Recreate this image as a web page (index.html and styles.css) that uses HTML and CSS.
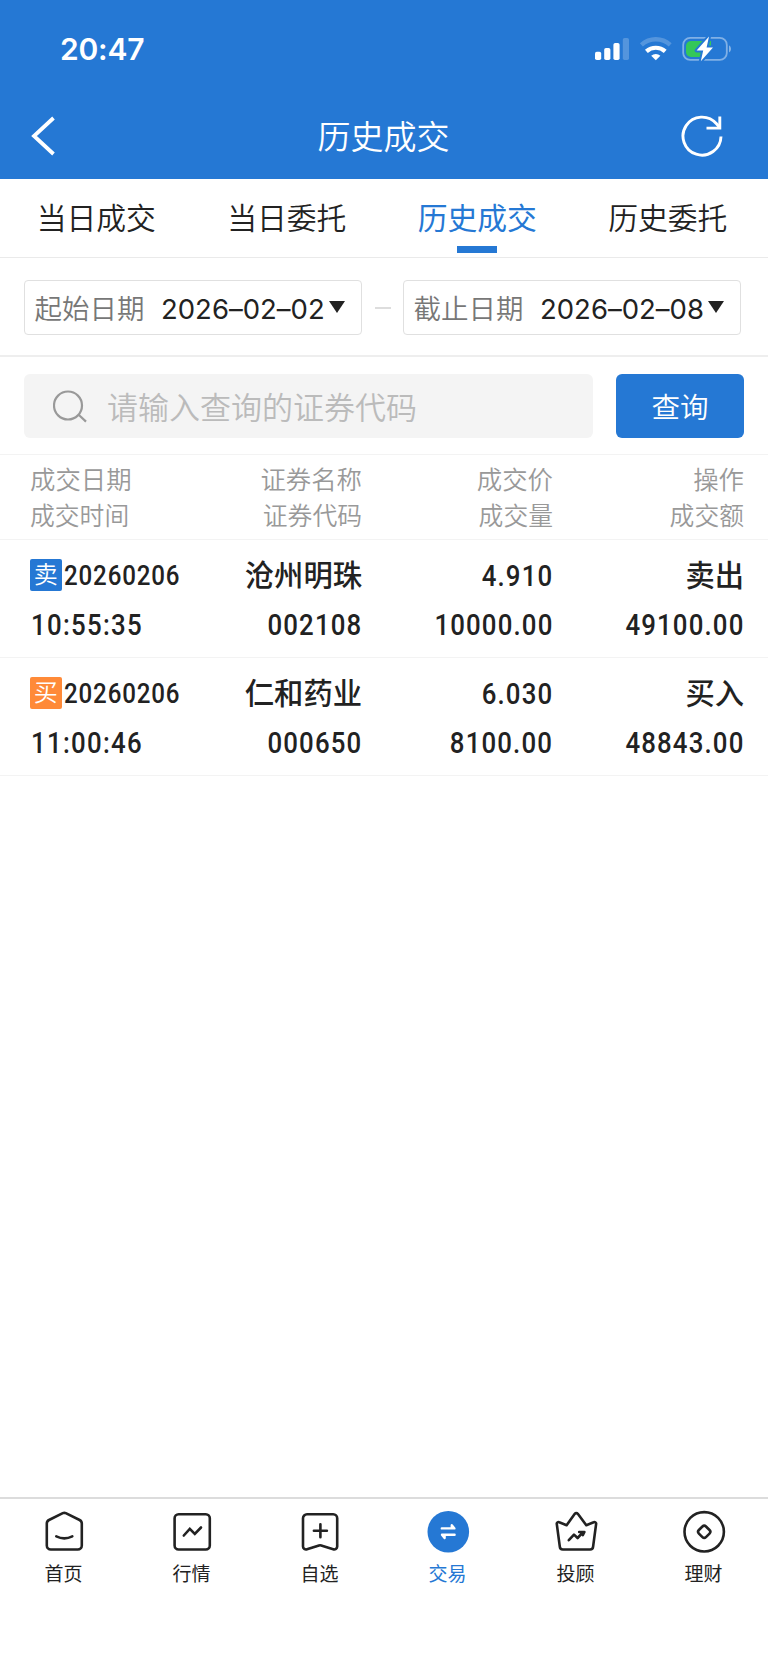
FILE: index.html
```html
<!DOCTYPE html>
<html lang="zh-CN">
<head>
<meta charset="utf-8">
<title>历史成交</title>
<link rel="stylesheet" href="styles.css">
</head>
<body>
<div class="app">
  <header class="top">
    <div class="status">
      <span class="clock">20:47</span>
      <svg class="status-icons" width="144" height="30" viewBox="590 34 144 30">
        <g fill="#fff">
          <rect x="595" y="51.8" width="6.2" height="8.2" rx="1.8"/>
          <rect x="604.2" y="48" width="6.2" height="12" rx="1.8"/>
          <rect x="613.4" y="43" width="6.2" height="17" rx="1.8"/>
          <rect x="622.8" y="38" width="6.2" height="22" rx="1.8" opacity=".22"/>
          <path d="M655.8 60.2l-4.6-4.4a7 7 0 0 1 9.2 0z"/>
        </g>
        <path d="M646.4 51.4a14 14 0 0 1 18.8 0" fill="none" stroke="#fff" stroke-width="4.2"/>
        <path d="M641.4 44.8a21.5 21.5 0 0 1 28.8 0" fill="none" stroke="#fff" stroke-width="4.4" opacity=".22"/>
        <rect x="683.2" y="37.9" width="43.6" height="22" rx="7" fill="none" stroke="#fff" stroke-width="1.8" opacity=".42"/>
        <path d="M729 45.2a4.4 4.4 0 0 1 0 7.4z" fill="#fff" opacity=".45"/>
        <path d="M691 41h20v5l-6 11h-14a5 5 0 0 1-5-5v-6a5 5 0 0 1 5-5z" fill="#34c759"/>
        <path d="M709 36.5L696.6 50.6h6.6l-2.4 10.6L713 47.4h-6.4z" fill="#fff" stroke="#2578d4" stroke-width="4" stroke-linejoin="round" paint-order="stroke"/>
      </svg>
    </div>
    <div class="nav">
      <svg width="24" height="40" viewBox="0 0 24 40"><path d="M22.500 2L3 20l19.500 18" fill="none" stroke="#fff" stroke-width="3.8"/></svg>
      <h1>历史成交</h1>
      <svg width="42" height="42" viewBox="0 0 42 42" fill="none" stroke="#fff" stroke-width="2.9"><path d="M40 21.500A19 19 0 1 1 35.5 8.8l3.4 4"/><path d="M38.800 1.500v11.600H25.500"/></svg>
    </div>
  </header>

  <nav class="tabs">
    <div class="tab">当日成交</div>
    <div class="tab">当日委托</div>
    <div class="tab active">历史成交</div>
    <div class="tab">历史委托</div>
  </nav>

  <section class="dates">
    <div class="date-box"><span class="date-label">起始日期</span><span class="date">2026–02–02</span><i class="caret"></i></div>
    <span class="dash"></span>
    <div class="date-box"><span class="date-label">截止日期</span><span class="date">2026–02–08</span><i class="caret"></i></div>
  </section>

  <section class="search">
    <div class="field">
      <svg width="34" height="34" viewBox="0 0 34 34" fill="none" stroke="#999" stroke-width="2.200"><circle cx="15" cy="16.500" r="14"/><path d="M25.400 25.500L33 32.600"/></svg>
      <span>请输入查询的证券代码</span>
    </div>
    <button class="query">查询</button>
  </section>

  <section class="grid head">
    <div class="cell"><span>成交日期</span><span class="sub">成交时间</span></div>
    <div class="cell"><span>证券名称</span><span class="sub">证券代码</span></div>
    <div class="cell"><span>成交价</span><span class="sub">成交量</span></div>
    <div class="cell"><span>操作</span><span class="sub">成交额</span></div>
  </section>

  <section class="grid row">
    <div class="cell"><span class="line"><b class="badge sell">卖</b><span class="num small">20260206</span></span><span class="num time">10:55:35</span></div>
    <div class="cell"><span class="name">沧州明珠</span><span class="num">002108</span></div>
    <div class="cell"><span class="num">4.910</span><span class="num">10000.00</span></div>
    <div class="cell"><span class="name">卖出</span><span class="num">49100.00</span></div>
  </section>
  <section class="grid row">
    <div class="cell"><span class="line"><b class="badge buy">买</b><span class="num small">20260206</span></span><span class="num time">11:00:46</span></div>
    <div class="cell"><span class="name">仁和药业</span><span class="num">000650</span></div>
    <div class="cell"><span class="num">6.030</span><span class="num">8100.00</span></div>
    <div class="cell"><span class="name">买入</span><span class="num">48843.00</span></div>
  </section>

  <footer class="bottom">
    <div class="item"><svg viewBox="0 0 44 44"><path d="M20.800 3.200a3.400 3.400 0 0 1 3 0L37.600 10a4 4 0 0 1 2.200 3.600V35.500a4 4 0 0 1-4 4h-27a4 4 0 0 1-4-4V13.600a4 4 0 0 1 2.200-3.600z"/><path d="M14.300 26.400q8 4 16 0" stroke-linecap="round"/></svg><span>首页</span></div>
    <div class="item"><svg viewBox="0 0 44 44"><rect x="4.600" y="4.300" width="35.200" height="35.200" rx="4"/><path d="M13.800 25.500l6-6.600 5 5 6.200-6.400" stroke-linecap="round"/></svg><span>行情</span></div>
    <div class="item"><svg viewBox="0 0 44 44"><path d="M9 4.300h26.200a4 4 0 0 1 4 4v28.200a3 3 0 0 1-4 2.800L23.200 35.500a3.500 3.500 0 0 0-2.200 0L9 39.300a3 3 0 0 1-4-2.800V8.300a4 4 0 0 1 4-4z"/><path d="M15.900 20.800h13M22.400 14.300v13" stroke-linecap="round"/></svg><span>自选</span></div>
    <div class="item on"><svg viewBox="0 0 44 44"><circle cx="22.300" cy="21.800" r="20.800" fill="#2578d4" stroke="none"/><path d="M15.800 18.400h12.600l-2.600-3.200v2.600M28.600 24.800H16l2.600 3.200v-2.600" stroke="#fff" stroke-width="2.400" stroke-linecap="round" stroke-linejoin="round"/></svg><span>交易</span></div>
    <div class="item"><svg viewBox="0 0 44 44"><path d="M20.800 3.800a2 2 0 0 1 3 0l8.500 11.400 7.400-3a1.700 1.700 0 0 1 2.400 1.900l-3 22.600a3 3 0 0 1-3 2.800H8.800a3 3 0 0 1-3-2.800l-3-22.600a1.700 1.700 0 0 1 2.400-1.900l7.400 3z" stroke-linejoin="round"/><path d="M14.800 30.200l5.200-5.600 3.600 3.400 5.200-5.600M25.200 22h5.200l-1.600 3.200" stroke-linejoin="round" stroke-linecap="round"/></svg><span>投顾</span></div>
    <div class="item"><svg viewBox="0 0 44 44"><circle cx="22.200" cy="21.800" r="19.700"/><rect x="17.200" y="16.800" width="10" height="10" rx="2.500" transform="rotate(45 22.200 21.800)"/></svg><span>理财</span></div>
  </footer>
</div>
</body>
</html>
```
FILE: styles.css
```css
* { box-sizing: border-box; }
body {
  margin: 0;
  background: #fff;
  color: #222;
  font-family: "Noto Sans CJK SC", sans-serif;
}
.app { width: 768px; height: 1663px; display: flex; flex-direction: column; }
svg { display: block; flex: none; }

.top { height: 179px; background: #2578d4; color: #fff; flex: none; }
.status { height: 94px; padding: 4px 34px 0 60px; display: flex; align-items: center; justify-content: space-between; }
.clock { font: 600 30px/36px Inter, sans-serif; letter-spacing: -.2px; }
.nav { height: 84px; padding: 0 45px 0 31px; display: flex; align-items: center; justify-content: space-between; }
.nav h1 { margin: -3px 0 0 31px; font-size: 33px; line-height: 48px; font-weight: 350; }

.tabs { height: 79px; padding: 0 5px 0 1px; display: flex; border-bottom: 1px solid #eaeaea; flex: none; }
.tab { flex: 1; text-align: center; font-size: 29.800px; line-height: 74px; font-weight: 350; }
.tab.active { color: #2578d4; font-weight: 400; }
.tab.active::after { content: ""; display: block; width: 40px; height: 6.500px; margin: -7px auto 0; background: #2578d4; }

.dates { height: 98.500px; padding: 22px 27px 0 24px; display: flex; justify-content: space-between; border-bottom: 2px solid #eee; flex: none; }
.date-box { width: 338px; height: 55px; border: 1px solid #e0e0e0; border-radius: 4px; padding-left: 9.500px; display: flex; align-items: center; }
.date-label { font-size: 27.500px; line-height: 52px; font-weight: 350; color: #777; margin: -2px 16.500px 0 0; }
.date { width: 164px; font: 400 27.500px/54px Inter, sans-serif; font-feature-settings: "calt" 0; white-space: nowrap; padding-top: 2px; }
.caret { margin: -2px 0 0 4px; border: 8px solid transparent; border-top: 12.500px solid #222; border-bottom: 0; }
.dash { width: 16px; height: 2px; margin-top: 27px; background: #ddd; }

.search { height: 98.500px; padding: 17.500px 24px 0; display: flex; justify-content: space-between; border-bottom: 1px solid #f3f3f3; flex: none; }
.field { width: 569px; height: 63.500px; border-radius: 6px; background: #f4f4f4; display: flex; align-items: center; padding-left: 29px; color: #bbb; font-size: 31px; font-weight: 350; }
.field span { line-height: 60px; margin: 0 0 0 20px; }
.query { width: 128px; height: 63.500px; border: 0; border-radius: 6px; background: #2578d4; color: #fff; padding: 0; font: 350 28.500px/60px "Noto Sans CJK SC", sans-serif; }

.grid { display: grid; grid-template-columns: 191px 171px 191px 191px; padding-right: 24px; border-bottom: 1px solid #f3f3f3; flex: none; }
.cell { display: flex; flex-direction: column; align-items: flex-end; }
.cell:first-child { align-items: flex-start; padding-left: 30px; }
.head { height: 85px; padding-top: 5px; color: #999; font-size: 25.400px; line-height: 36px; font-weight: 350; }
.head .sub { font-size: 24.800px; }
.row { height: 118px; padding-top: 11px; }
.cell .name, .line { height: 49px; line-height: 45px; }
.name { font-size: 29.300px; font-weight: 500; }
.num { font: 500 30px/49px Roboto, sans-serif; height: 49px; letter-spacing: 1.35px; margin-right: -.500px; transform: scaleX(.86); transform-origin: right; }
.cell:first-child .num { transform-origin: left; }
.num.time { margin-left: 1px; letter-spacing: 1.500px; }
.line { display: flex; align-items: center; }
.badge { width: 31.500px; height: 31.500px; margin-top: -1px; border-radius: 2px; color: #fff; font-size: 24px; line-height: 27px; font-weight: 350; text-align: center; }
.sell { background: #2578d4; }
.buy { background: #ff8a38; }
.num.small { font-size: 28px; margin-left: 2px; letter-spacing: 1px; }

.bottom { height: 166px; margin-top: auto; border-top: 2px solid #dcdcdc; display: flex; flex: none; }
.item { flex: 1; display: flex; flex-direction: column; align-items: center; padding-top: 11px; font-size: 19px; line-height: 28px; }
.item svg { width: 44px; height: 44px; fill: none; stroke: #222; stroke-width: 2.600; }
.item span { margin: 5px 1px 0 0; }
.on { color: #2578d4; }
```
